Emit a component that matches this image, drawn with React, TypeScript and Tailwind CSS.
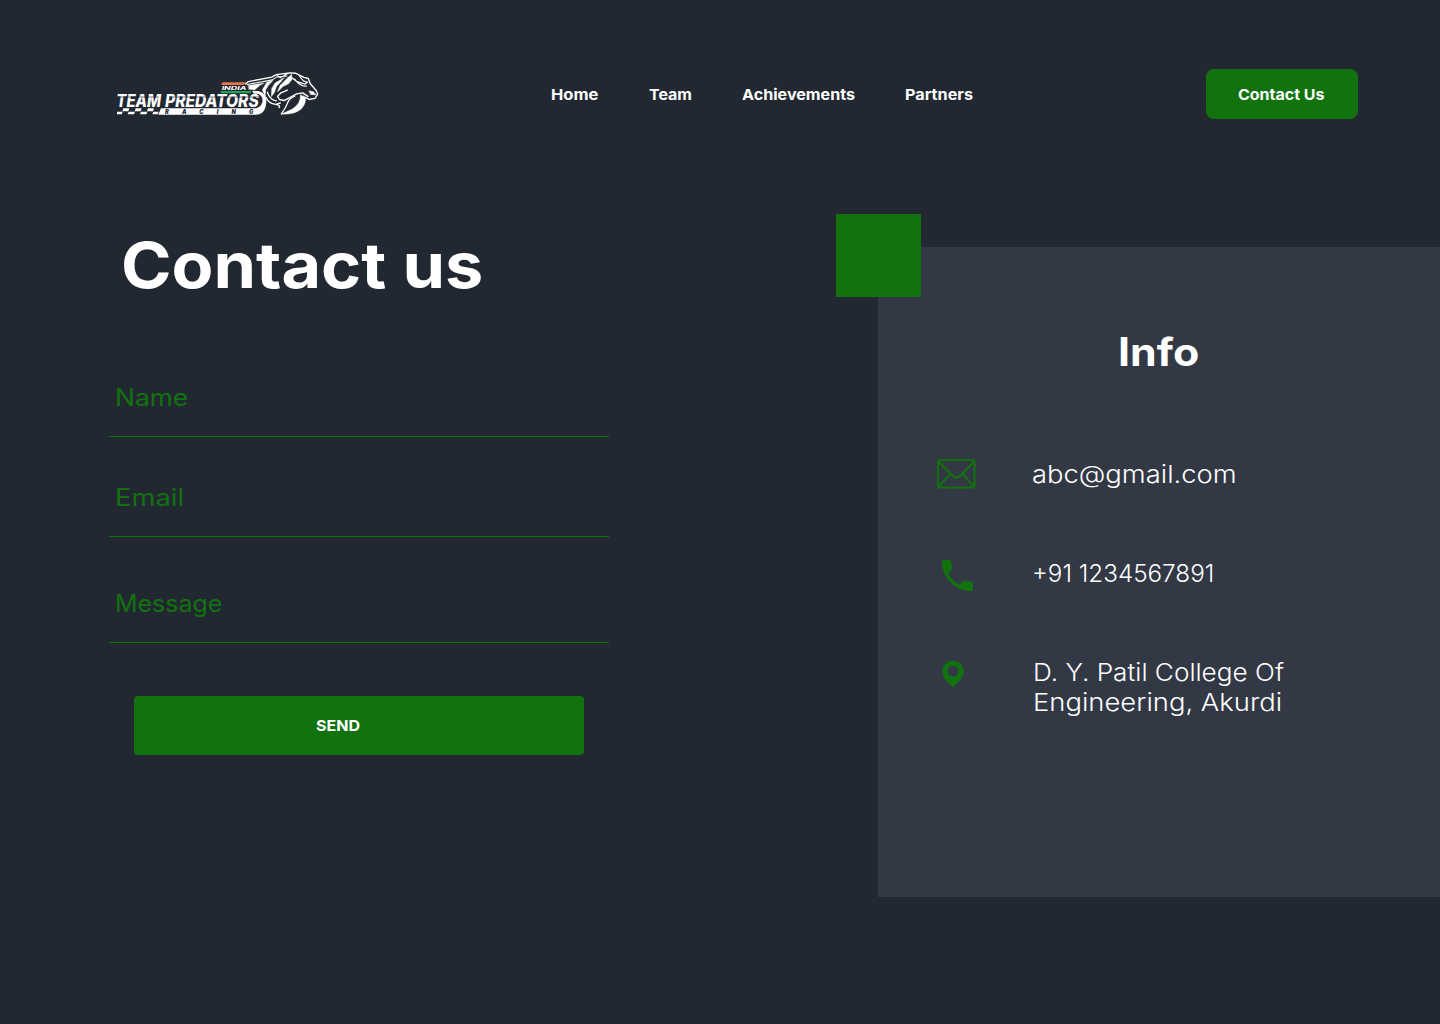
import type { ReactNode } from "react";

function Logo() {
  return (
    <svg width="210" height="55" viewBox="0 0 630 165" className="block shrink-0" role="img" aria-label="Team Predators Racing India">
      <path d="M337 49H409L400 57H334Z" fill="#e8734a" />
      <path d="M333 75H423V82H330Z" fill="#22a35a" />
      <text x="335" y="71" textLength="74" lengthAdjust="spacingAndGlyphs" fill="#fff" fontFamily="Inter" fontWeight="700" fontStyle="italic" fontSize="13">INDIA</text>
      <g fill="#fff" fontFamily="Inter" fontWeight="800" fontStyle="italic" fontSize="50">
        <text x="19" y="122" textLength="134" lengthAdjust="spacingAndGlyphs">TEAM</text>
        <text x="165" y="122" textLength="281" lengthAdjust="spacingAndGlyphs">PREDATORS</text>
      </g>
      <path d="M20 93H146M178 93H446" stroke="#222831" strokeWidth="2" />
      <g fill="#fff" transform="translate(0 -1)">
        <path d="M40 128H58L55 137H37ZM77 128H95L92 137H74ZM114 128H132L129 137H111Z" />
        <path d="M21 138H38L35 146H21ZM56 138H75L72 146H53ZM93 138H112L109 146H90ZM130 138H146L143 146H127Z" />
        <path d="M153 128H438Q452 125 457 110Q461 92 444 84H432L426 76H446Q470 84 469 108Q467 147 436 147H145Z" />
      </g>
      <text x="165" y="143" textLength="265" lengthAdjust="spacing" fill="#222831" fontFamily="Inter" fontWeight="900" fontStyle="italic" fontSize="17">RACING</text>
      <g transform="translate(435 7) scale(1 1.05)" fill="none" stroke="#fff" strokeLinecap="round" strokeLinejoin="round">
        <path d="M-28 45L-20 38L50 25L64 18L104 13L121 14L147 26L160 29L166 44L184 64L188 74L180 86L162 89L153 84" strokeWidth="4" />
        <path d="M-23 46L52 33L64 25L96 22M67 20L76 27L98 15" strokeWidth="3" />
        <path d="M-20 49L28 42L15 48L-1 62L-18 60Z" fill="#fff" strokeWidth="1" />
        <path d="M36 39L54 35L40 49L32 61L31 82L22 62Z" fill="#fff" strokeWidth="1" />
        <path d="M60 42L88 26L78 38L65 51L58 70L49 81L50 58Z" fill="#fff" strokeWidth="1" />
        <path d="M99 26L110 17L111 32L101 44L84 52L67 68L75 49Z" fill="#fff" strokeWidth="1" />
        <path d="M111 27L124 37L150 45L158 40L145 36L134 23M119 31L130 43L144 50L154 51" strokeWidth="3.5" />
        <path d="M162 64L176 67L183 76L167 75Z" fill="#fff" strokeWidth="1" />
        <path d="M159 80L143 70L125 73L104 84L87 92L73 89L68 80L78 70L97 62" strokeWidth="4" />
        <path d="M136 76Q138 100 112 116L78 131Q112 132 130 122Q153 110 152 82Z" fill="#fff" strokeWidth="1" />
        <path d="M119 80Q104 84 98 98Q93 113 79 130M34 84Q40 100 62 103L76 99M37 68Q44 90 64 93M62 103Q78 106 72 112" strokeWidth="4" />
      </g>
    </svg>
  );
}

function MailIcon() {
  return (
    <svg width="40" height="31" viewBox="0 0 40 31" fill="none" stroke="#12720e" strokeWidth="2.1" className="-mt-px block">
      <rect x="2" y="2" width="36.500" height="27.500" rx="2" />
      <path d="M2.500 3.500L15.500 16.800Q20.500 22 25.500 16.800L38 3.500M2.800 28.300L14.200 16.200M37.800 28.300L26.800 16.200" />
    </svg>
  );
}

function PhoneIcon() {
  return (
    <svg width="31" height="31" viewBox="3 3 18 18" fill="#12720e" className="block">
      <path d="M6.54 3H4c-.55 0-1 .45-1 1 0 9.39 7.61 17 17 17 .55 0 1-.45 1-1v-3.49c0-.55-.45-1-1-1-1.24 0-2.45-.2-3.57-.57a.84.84 0 0 0-.31-.05c-.26 0-.51.1-.71.29l-2.2 2.2a15.15 15.15 0 0 1-6.59-6.59l2.2-2.2c.28-.28.36-.67.25-1.02A11.36 11.36 0 0 1 8.5 4c0-.55-.45-1-1-1z" />
    </svg>
  );
}

function PinIcon() {
  return (
    <svg width="22" height="28" viewBox="0 0 22 28" fill="#12720e" fillRule="evenodd" className="block">
      <path d="M11 .7C5 .7.3 5.300.3 11.200c0 4.300 2.300 7.400 5.200 10.700L11 27.600l5.500-5.700c2.900-3.300 5.200-6.400 5.200-10.700C21.700 5.300 17 .7 11 .7Zm0 5a5.400 5.400 0 1 1 0 10.800 5.400 5.400 0 0 1 0-10.800Z" />
    </svg>
  );
}

function Field({ label, className, stretch }: { label: string; className: string; stretch: string }) {
  return (
    <label className={`block w-[500px] border-b border-[#12720e] pl-[6px] ${className}`}>
      <span className={`block w-max origin-left text-[24px] leading-[30px] text-[#12720e] ${stretch}`}>{label}</span>
    </label>
  );
}

function InfoRow({ icon, children, className }: { icon: ReactNode; children: ReactNode; className: string }) {
  return (
    <div className={`flex items-start ${className}`}>
      <div className="w-24 shrink-0">{icon}</div>
      <div className="whitespace-nowrap pt-px text-[24px] font-[340] leading-[30px]">{children}</div>
    </div>
  );
}

export default function App() {
  return (
    <div className="h-[1024px] w-[1440px] overflow-hidden bg-[#222831] font-['Inter',sans-serif] text-white">
      <header className="flex pt-[66px]">
        <div className="ml-[110px] w-[441px]">
          <Logo />
        </div>
        <nav className="flex w-[655px] pt-[19px] text-[15px] font-bold leading-5">
          <a className="w-[98px]"><span className="inline-block origin-left scale-x-[1.1]">Home</span></a>
          <a className="w-[93px]"><span className="inline-block origin-left scale-x-[1.065]">Team</span></a>
          <a className="w-[163px]"><span className="inline-block origin-left scale-x-[1.075]">Achievements</span></a>
          <a><span className="inline-block origin-left scale-x-[1.08]">Partners</span></a>
        </nav>
        <button className="mt-[3px] flex h-[50px] w-[152px] items-center rounded-lg bg-[#12720e] pl-8 pt-px text-[15px] font-bold leading-5">
          <span className="origin-left scale-x-[1.065] whitespace-nowrap">Contact Us</span>
        </button>
      </header>

      <main className="flex">
        <section className="w-[878px] pl-[109px] pt-[104px]">
          <h1 className="ml-[12px] w-max origin-left scale-x-[1.085] text-[63px] font-bold leading-[80px]">Contact us</h1>
          <form>
            <Field label="Name" className="mt-[78px] h-[54px]" stretch="scale-x-[1.1]" />
            <Field label="Email" className="h-[100px] pt-[46px]" stretch="scale-x-[1.14]" />
            <Field label="Message" className="h-[106px] pt-[52px]" stretch="scale-x-[1.04]" />
            <button type="button" className="ml-[25px] mt-[53px] flex h-[59px] w-[450px] items-center rounded bg-[#12720e] pl-[182px] text-[15px] font-bold leading-5">
              <span className="origin-left scale-x-[1.07]">SEND</span>
            </button>
          </form>
        </section>

        <aside className="relative mt-[126px] h-[650px] w-[562px] bg-[#333845] pt-20">
          <div className="absolute -left-[42px] -top-[33px] h-[83px] w-[85px] bg-[#12720e]" />
          <h2 className="ml-[240px] w-max origin-left scale-x-[1.1] text-[39px] font-bold leading-[50px]">Info</h2>
          <InfoRow className="ml-[58px] mt-[82px] h-[99px]" icon={<MailIcon />}>
            <p className="w-max origin-left scale-x-[1.14]">abc@gmail.com</p>
          </InfoRow>
          <InfoRow className="ml-[58px] h-[99px]" icon={<div className="ml-1.5 pt-[2px]"><PhoneIcon /></div>}>
            <p className="w-max origin-left scale-x-[1.01]">+91 1234567891</p>
          </InfoRow>
          <InfoRow className="ml-[58px]" icon={<div className="ml-1.5 pt-[3px]"><PinIcon /></div>}>
            <p className="ml-px w-max origin-left scale-x-[1.09]">D. Y. Patil College Of</p>
            <p className="ml-px w-max origin-left scale-x-[1.142]">Engineering, Akurdi</p>
          </InfoRow>
        </aside>
      </main>
    </div>
  );
}
